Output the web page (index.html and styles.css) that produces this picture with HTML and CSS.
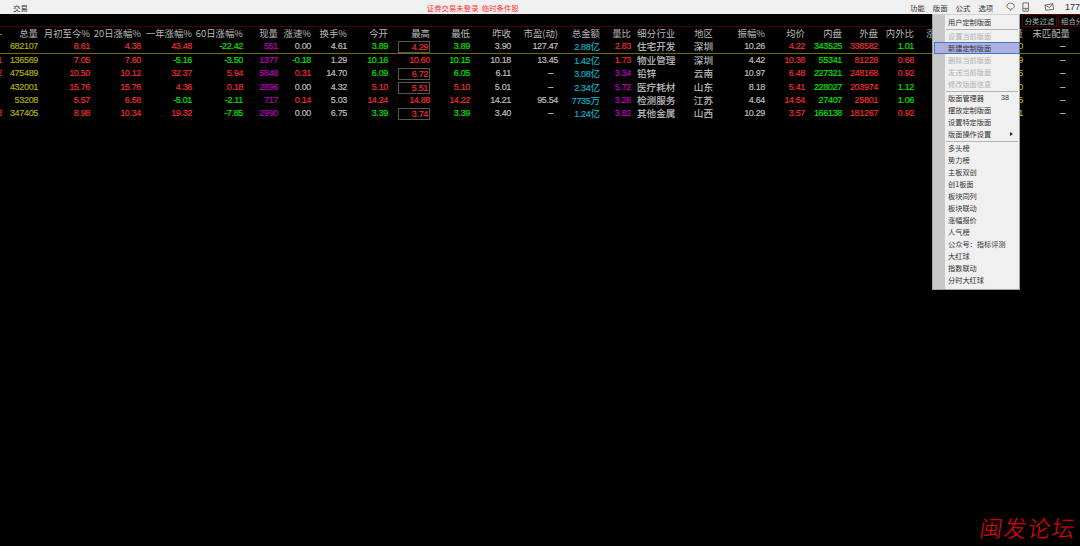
FILE: index.html
```html
<!DOCTYPE html>
<html lang="zh-CN">
<head>
  <meta charset="UTF-8" />
  <title>交易</title>
  <link rel="stylesheet" href="styles.css">
</head>
<body>
  <div class="menubar">
    <span class="menubar-left">交易</span>
    <span class="menubar-status">证券交易未登录&nbsp;&nbsp;临时条件股</span>
    <div class="menubar-right">
      <span>功能</span>
      <span>版面</span>
      <span>公式</span>
      <span>选项</span>
      <svg class="icon cloud" width="10" height="10" viewBox="0 0 10 10"><path d="M5 .8C7.400 .8 9 2.200 9 4 9 5.800 7.400 7 5.800 7L5 8.800 4.200 7C2.600 7 1 5.800 1 4 1 2.200 2.600 .8 5 .8Z" fill="none" stroke="#666" stroke-width="1"/></svg>
      <svg class="icon book" width="8" height="10" viewBox="0 0 8 10"><path d="M1 .5H7V9.500H1ZM1 6.500H7M3 8H5" fill="none" stroke="#666" stroke-width="1"/></svg>
      <svg class="icon mail" width="11" height="8" viewBox="0 0 11 8"><path d="M1 2 9.500 .5 10.500 6.500 2 7.500ZM1 2 6 4.500 9.500 .5" fill="none" stroke="#666" stroke-width="1"/></svg>
      <span class="menubar-num">177</span>
    </div>
  </div>

  <div class="tabstrip">
    <span class="tab">分类过滤</span>
    <span class="tab">组合分</span>
  </div>

  <div class="quotes">
    <div class="row head">
      <span class="clip">-</span><span>总量</span><span>月初至今%</span><span>20日涨幅%</span><span>一年涨幅%</span><span>60日涨幅%</span><span>现量</span><span>涨速%</span><span>换手%</span><span>今开</span><span>最高</span><span>最低</span><span>昨收</span><span>市盈(动)</span><span>总金额</span><span>量比</span><span class="left">细分行业</span><span>地区</span><span>振幅%</span><span>均价</span><span>内盘</span><span>外盘</span><span>内外比</span><span>涨跌</span><span>量</span><span>未匹配量</span><span></span>
    </div>
    <div class="row current">
      <span class="clip"></span><span class="y">682107</span><span class="r">8.61</span><span class="r">4.38</span><span class="r">43.48</span><span class="g">-22.42</span><span class="m">551</span><span class="w">0.00</span><span class="w">4.61</span><span class="g">3.89</span><span class="r box">4.29</span><span class="g">3.89</span><span class="w">3.90</span><span class="w">127.47</span><span class="c">2.88<em>亿</em></span><span class="r">2.83</span><span class="left w">住宅开发</span><span class="w cn">深圳</span><span class="w">10.26</span><span class="r">4.22</span><span class="g">343525</span><span class="r">338582</span><span class="g">1.01</span><span></span><span class="y">0</span><span class="w dash">–</span><span></span>
    </div>
    <div class="row">
      <span class="clip r">1</span><span class="y">136569</span><span class="r">7.05</span><span class="r">7.60</span><span class="g">-5.16</span><span class="g">-3.50</span><span class="m">1377</span><span class="g">-0.18</span><span class="w">1.29</span><span class="g">10.16</span><span class="r">10.60</span><span class="g">10.15</span><span class="w">10.18</span><span class="w">13.45</span><span class="c">1.42<em>亿</em></span><span class="r">1.73</span><span class="left w">物业管理</span><span class="w cn">深圳</span><span class="w">4.42</span><span class="r">10.38</span><span class="g">55341</span><span class="r">81228</span><span class="r">0.68</span><span></span><span class="y">9</span><span class="w dash">–</span><span></span>
    </div>
    <div class="row">
      <span class="clip r">2</span><span class="y">475489</span><span class="r">10.50</span><span class="r">10.12</span><span class="r">32.37</span><span class="r">5.94</span><span class="m">5848</span><span class="r">0.31</span><span class="w">14.70</span><span class="g">6.09</span><span class="r box">6.72</span><span class="g">6.05</span><span class="w">6.11</span><span class="w dash">–</span><span class="c">3.08<em>亿</em></span><span class="m">3.34</span><span class="left w">铅锌</span><span class="w cn">云南</span><span class="w">10.97</span><span class="r">6.48</span><span class="g">227321</span><span class="r">248168</span><span class="r">0.92</span><span></span><span class="y">5</span><span class="w dash">–</span><span></span>
    </div>
    <div class="row">
      <span class="clip"></span><span class="y">432001</span><span class="r">15.76</span><span class="r">15.76</span><span class="r">4.36</span><span class="r">0.18</span><span class="m">2896</span><span class="w">0.00</span><span class="w">4.32</span><span class="r">5.10</span><span class="r box">5.51</span><span class="r">5.10</span><span class="w">5.01</span><span class="w dash">–</span><span class="c">2.34<em>亿</em></span><span class="m">5.72</span><span class="left w">医疗耗材</span><span class="w cn">山东</span><span class="w">8.18</span><span class="r">5.41</span><span class="g">228027</span><span class="r">203974</span><span class="g">1.12</span><span></span><span class="y">0</span><span class="w dash">–</span><span></span>
    </div>
    <div class="row">
      <span class="clip"></span><span class="y">53208</span><span class="r">5.57</span><span class="r">6.58</span><span class="g">-5.01</span><span class="g">-2.11</span><span class="m">717</span><span class="r">0.14</span><span class="w">5.03</span><span class="r">14.24</span><span class="r">14.88</span><span class="r">14.22</span><span class="w">14.21</span><span class="w">95.54</span><span class="c">7735<em>万</em></span><span class="m">3.26</span><span class="left w">检测服务</span><span class="w cn">江苏</span><span class="w">4.64</span><span class="r">14.54</span><span class="g">27407</span><span class="r">25801</span><span class="g">1.06</span><span></span><span class="y">6</span><span class="w dash">–</span><span></span>
    </div>
    <div class="row">
      <span class="clip r">3</span><span class="y">347405</span><span class="r">8.98</span><span class="r">10.34</span><span class="r">19.32</span><span class="g">-7.85</span><span class="m">2990</span><span class="w">0.00</span><span class="w">6.75</span><span class="g">3.39</span><span class="r box">3.74</span><span class="g">3.39</span><span class="w">3.40</span><span class="w dash">–</span><span class="c">1.24<em>亿</em></span><span class="m">3.82</span><span class="left w">其他金属</span><span class="w cn">山西</span><span class="w">10.29</span><span class="r">3.57</span><span class="g">166138</span><span class="r">181267</span><span class="r">0.92</span><span></span><span class="y">1</span><span class="w dash">–</span><span></span>
    </div>
  </div>

  <div class="dropdown">
    <div class="item">用户定制版面</div>
    <div class="sep"></div>
    <div class="item off">设置当前版面</div>
    <div class="item active">新建定制版面</div>
    <div class="item off">删除当前版面</div>
    <div class="item off">发送当前版面</div>
    <div class="item off">修改版面信息</div>
    <div class="sep"></div>
    <div class="item">版面管理器<b>38</b></div>
    <div class="item">摆放定制版面</div>
    <div class="item">设置特定版面</div>
    <div class="item">版面操作设置<i class="arrow"></i></div>
    <div class="sep"></div>
    <div class="item">多头榜</div>
    <div class="item">势力榜</div>
    <div class="item">主板双创</div>
    <div class="item">创1板面</div>
    <div class="item">板块同列</div>
    <div class="item">板块联动</div>
    <div class="item">涨幅报价</div>
    <div class="item">人气榜</div>
    <div class="item">公众号：指标评测</div>
    <div class="item">大红球</div>
    <div class="item">指数联动</div>
    <div class="item">分时大红球</div>
  </div>

  <div class="watermark">闽发论坛</div>
</body>
</html>
```

FILE: styles.css
```css
body {
  margin: 0;
  height: 546px;
  overflow: hidden;
  background: #000;
  font-family: "Liberation Sans", "Noto Sans CJK SC", sans-serif;
}

.menubar {
  height: 14px;
  background: #f0f0f0;
  display: flex;
  align-items: center;
  position: relative;
  font-family: "Noto Sans CJK SC", sans-serif;
  font-size: 7.4px;
  color: #333;
}

.menubar-left {
  margin-left: 13px;
}

.menubar-status {
  margin-left: 399px;
  color: #f33;
}

.menubar-right {
  margin-left: auto;
  display: flex;
  align-items: center;
  gap: 8px;
  width: 170px;
  flex: none;
  overflow: hidden;
  white-space: nowrap;
}

.menubar-right .cloud {
  margin-left: 5px;
}

.menubar-right .book {
  margin-left: -1px;
}

.menubar-right .mail {
  margin-left: 6px;
}

.menubar-right .menubar-num {
  margin-left: 3px;
  font-family: "Liberation Sans", sans-serif;
  font-size: 9px;
}

.tabstrip {
  height: 13px;
  box-sizing: border-box;
  border-bottom: 1px solid #3c0000;
  display: flex;
  justify-content: flex-end;
  overflow: hidden;
  font-family: "Noto Sans CJK SC", sans-serif;
  font-size: 7.4px;
}

.tab {
  width: 35px;
  flex: none;
  box-sizing: border-box;
  margin-left: 1px;
  border: 1px solid #5a0000;
  border-bottom: 0;
  color: #b4b4b4;
  line-height: 11px;
  text-align: center;
  white-space: nowrap;
  overflow: hidden;
}

.tab:last-child {
  width: 22px;
  border-right: 0;
  text-align: left;
  padding-left: 2px;
}

.row {
  display: grid;
  grid-template-columns: 2px 36px 52px 51px 51px 51px 35px 33px 36px 41px 42px 40px 41px 47px 42px 31px 49px 33px 52px 40px 37px 36px 36px 31px 78px 47px 10px;
  height: 13.33px;
  box-sizing: border-box;
  font-size: 9px;
  letter-spacing: -0.33px;
  line-height: 13px;
  -webkit-text-stroke: 0.15px;
}

.row span {
  text-align: right;
  white-space: nowrap;
  min-width: 0;
}

.row .clip {
  direction: rtl;
  overflow: hidden;
  text-align: left;
  color: #b8b8b8;
}

.row .clip.r {
  color: #f03030;
}

.row .left {
  text-align: left;
  padding-left: 6px;
  font-family: "Noto Sans CJK SC", sans-serif;
  font-size: 9.6px;
  letter-spacing: 0;
}

.row.head {
  color: #b8b8b8;
  font-family: "Noto Sans CJK SC", sans-serif;
  font-size: 9.4px;
  letter-spacing: 0;
  height: 13px;
  -webkit-text-stroke: 0;
}

.row.current {
  height: 14px;
  border-bottom: 1px solid #707000;
}

.row .cn {
  font-family: "Noto Sans CJK SC", sans-serif;
  font-size: 9.6px;
  letter-spacing: 0;
}

.row em {
  font-style: normal;
  font-family: "Noto Sans CJK SC", sans-serif;
  font-size: 9.6px;
  letter-spacing: 0;
}

.row .dash {
  padding-right: 5px;
}

.row .box {
  margin: 1px 0 1px 10px;
  border: 1px solid #555;
  line-height: 10px;
  padding-right: 1px;
}

.r { color: #f03030; }
.g { color: #00e600; }
.y { color: #b4b400; }
.m { color: #c000c0; }
.c { color: #00b8cc; }
.w { color: #c0c0c0; }

/* menu opened from 版面 */
.dropdown {
  position: absolute;
  top: 14px;
  left: 932px;
  width: 88px;
  height: 276px;
  box-sizing: border-box;
  padding: 0.5px 1px 0;
  background: linear-gradient(to right, #c8c8c8 12px, #f0f0f0 12px);
  border: 1px solid #a0a0a0;
  border-top-color: #d0d0d0;
  font-family: "Noto Sans CJK SC", sans-serif;
  font-size: 7.2px;
  color: #333;
}

.item {
  position: relative;
  height: 12.05px;
  line-height: 12px;
  padding-left: 14px;
  white-space: nowrap;
}

.item.off {
  color: #b0b0b0;
}

.item.active {
  box-sizing: border-box;
  width: 86px;
  padding-left: 13px;
  background: #b0b0e0;
  border: 1px solid #3c78c8;
  line-height: 10px;
}

.item b {
  position: absolute;
  left: 67px;
  font-weight: normal;
  font-family: "Liberation Sans", sans-serif;
}

.arrow {
  position: absolute;
  right: 5px;
  top: 4px;
  border-left: 3px solid #222;
  border-top: 2.5px solid transparent;
  border-bottom: 2.5px solid transparent;
}

.sep {
  height: 1px;
  margin: 1px 0 0 12px;
  background: #b4b4b4;
}

.watermark {
  position: absolute;
  right: 4px;
  bottom: 5px;
  font-family: "Noto Sans CJK SC", sans-serif;
  font-size: 23px;
  font-weight: 300;
  line-height: 28px;
  letter-spacing: 1px;
  color: #e8000c;
  transform: skewX(-8deg);
}
```
